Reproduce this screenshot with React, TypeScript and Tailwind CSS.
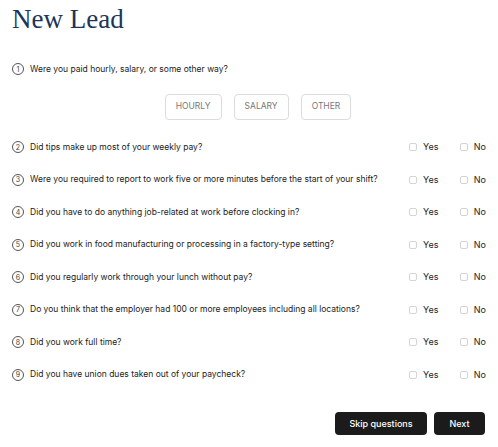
import React from "react";

const questions = [
  "Did tips make up most of your weekly pay?",
  "Were you required to report to work five or more minutes before the start of your shift?",
  "Did you have to do anything job-related at work before clocking in?",
  "Did you work in food manufacturing or processing in a factory-type setting?",
  "Did you regularly work through your lunch without pay?",
  "Do you think that the employer had 100 or more employees including all locations?",
  "Did you work full time?",
  "Did you have union dues taken out of your paycheck?",
];

function Num({ n }: { n: number }) {
  return (
    <span className="flex h-[12px] w-[12px] shrink-0 items-center justify-center rounded-full border border-[#555] text-[7px] leading-none text-[#444]">
      {n}
    </span>
  );
}

function Check({ label }: { label: string }) {
  return (
    <label className="flex items-center gap-[6px]">
      <span className="h-[8px] w-[8px] rounded-[2px] border border-[#d4d4d4] bg-white" />
      <span className="text-[9px] text-[#222]">{label}</span>
    </label>
  );
}

export default function App() {
  return (
    <div
      className="h-[447px] w-[498px] bg-white px-[12px] text-[#222]"
      style={{ fontFamily: "Inter, 'Liberation Sans', sans-serif" }}
    >
      <h1
        className="pt-[3px] text-[27px] leading-[32px] text-[#1c3559]"
        style={{ fontFamily: "'Liberation Serif', serif" }}
      >
        New Lead
      </h1>
      <div className="mt-[28px] flex items-center gap-[6px]">
        <Num n={1} />
        <span className="text-[8.5px]">Were you paid hourly, salary, or some other way?</span>
      </div>
      <div className="mt-[18px] flex justify-center gap-[12px] pl-[18px]">
        {["HOURLY", "SALARY", "OTHER"].map((t) => (
          <button
            key={t}
            className="h-[26px] rounded-[4px] border border-[#dcdcdc] px-[10px] text-[8.5px] text-[#777]"
          >
            {t}
          </button>
        ))}
      </div>
      <div className="mt-[11px] flex flex-col">
        {questions.map((q, i) => (
          <div key={i} className="flex h-[32.5px] items-center">
            <div className="flex flex-1 items-center gap-[6px]">
              <Num n={i + 2} />
              <span className="text-[8.5px]">{q}</span>
            </div>
            <div className="flex w-[77px] items-center">
              <div className="w-[52px]">
                <Check label="Yes" />
              </div>
              <Check label="No" />
            </div>
          </div>
        ))}
      </div>
      <div className="mt-[21px] flex justify-end gap-[7px] pr-[1px]">
        <button className="h-[23px] w-[92px] rounded-[4px] bg-[#1b1b1b] text-[9px] font-medium text-white">
          Skip questions
        </button>
        <button className="h-[23px] w-[51px] rounded-[4px] bg-[#1b1b1b] text-[9px] font-medium text-white">
          Next
        </button>
      </div>
    </div>
  );
}
